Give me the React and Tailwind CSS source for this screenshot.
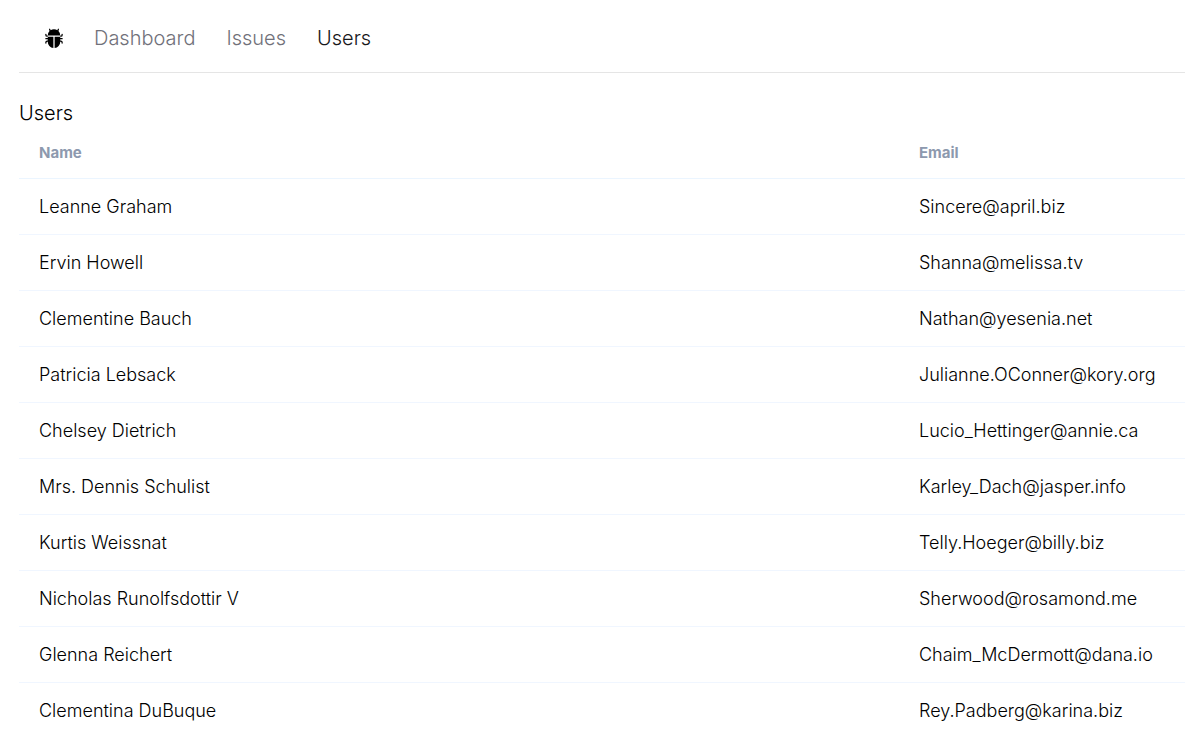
import { BsBugFill } from "react-icons/bs";

const links = [
  { label: "Dashboard", href: "#dashboard" },
  { label: "Issues", href: "#issues" },
  { label: "Users", href: "#users", current: true },
];

const users = [
  { name: "Leanne Graham", email: "Sincere@april.biz" },
  { name: "Ervin Howell", email: "Shanna@melissa.tv" },
  { name: "Clementine Bauch", email: "Nathan@yesenia.net" },
  { name: "Patricia Lebsack", email: "Julianne.OConner@kory.org" },
  { name: "Chelsey Dietrich", email: "Lucio_Hettinger@annie.ca" },
  { name: "Mrs. Dennis Schulist", email: "Karley_Dach@jasper.info" },
  { name: "Kurtis Weissnat", email: "Telly.Hoeger@billy.biz" },
  { name: "Nicholas Runolfsdottir V", email: "Sherwood@rosamond.me" },
  { name: "Glenna Reichert", email: "Chaim_McDermott@dana.io" },
  { name: "Clementina DuBuque", email: "Rey.Padberg@karina.biz" },
];

function NavBar() {
  return (
    <nav className="flex items-center gap-[30px] border-b border-[#e5e5e5] px-[25px] pt-[22px] pb-[18px]">
      <a href="#home" aria-label="Home" className="text-black">
        <BsBugFill className="size-5" />
      </a>
      <ul className="flex gap-[31px] text-xl leading-8">
        {links.map((link) => (
          <li key={link.label}>
            <a
              href={link.href}
              aria-current={link.current ? "page" : undefined}
              className={link.current ? "text-[#18181b]" : "text-[#71717a]"}
            >
              {link.label}
            </a>
          </li>
        ))}
      </ul>
    </nav>
  );
}

function UsersTable() {
  return (
    <table className="w-full text-left">
      <thead>
        <tr className="border-b border-[#ebf5ff] text-[15px] text-[#8d99ae]">
          <th scope="col" className="h-[49px] px-5 font-bold">Name</th>
          <th scope="col" className="w-[286px] px-5 font-bold">Email</th>
        </tr>
      </thead>
      <tbody>
        {users.map((user) => (
          <tr key={user.email} className="border-b border-[#f0f6ff] text-lg">
            <td className="h-14 px-5 pt-0.5">{user.name}</td>
            <td className="px-5 pt-0.5">{user.email}</td>
          </tr>
        ))}
      </tbody>
    </table>
  );
}

export default function App() {
  return (
    <div className="h-screen overflow-hidden bg-white pl-[19px] font-['Inter',sans-serif] font-light text-black">
      <NavBar />
      <main className="pt-6">
        <h1 className="text-xl leading-8">Users</h1>
        <UsersTable />
      </main>
    </div>
  );
}
